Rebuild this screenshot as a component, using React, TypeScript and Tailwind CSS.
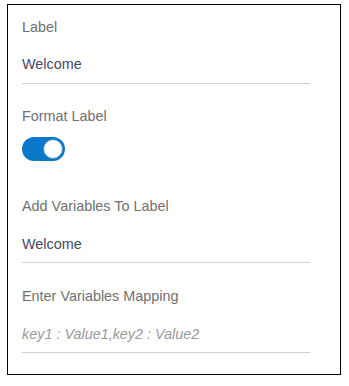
import React from "react";

export default function App() {
  return (
    <div className="w-[349px] h-[386px] bg-white" style={{ fontFamily: '"Liberation Sans", Arial, sans-serif' }}>
      <div className="ml-[7px] mt-[4px] w-[334px] h-[371px] border border-black pl-[14px] pr-[30px] pt-[14px] text-[14.4px]">
        <div className="leading-[17px] h-[17px] text-[#707070]">Label</div>
        <div className="mt-[20px] pb-[10px] border-b border-[#d2d2d2]">
          <div className="leading-[17px] h-[17px] text-[#474866]">Welcome</div>
        </div>
        <div className="mt-[24px] leading-[17px] h-[17px] text-[#707070]">Format Label</div>
        <div className="mt-[12px] w-[43px] h-[24px] rounded-full bg-[#0a78c8] flex items-center justify-end pr-[2px]">
          <div className="w-[20px] h-[20px] rounded-full bg-white border border-[#3a8fd0]" />
        </div>
        <div className="mt-[37px] leading-[17px] h-[17px] text-[#707070]">Add Variables To Label</div>
        <div className="mt-[21px] pb-[9px] border-b border-[#d2d2d2]">
          <div className="leading-[17px] h-[17px] text-[#474866]">Welcome</div>
        </div>
        <div className="mt-[25px] leading-[17px] h-[17px] text-[#707070]">Enter Variables Mapping</div>
        <div className="mt-[21px] pb-[9px] border-b border-[#d2d2d2]">
          <div className="leading-[17px] h-[17px] italic text-[#9a9a9a]">key1 : Value1,key2 : Value2</div>
        </div>
      </div>
    </div>
  );
}
